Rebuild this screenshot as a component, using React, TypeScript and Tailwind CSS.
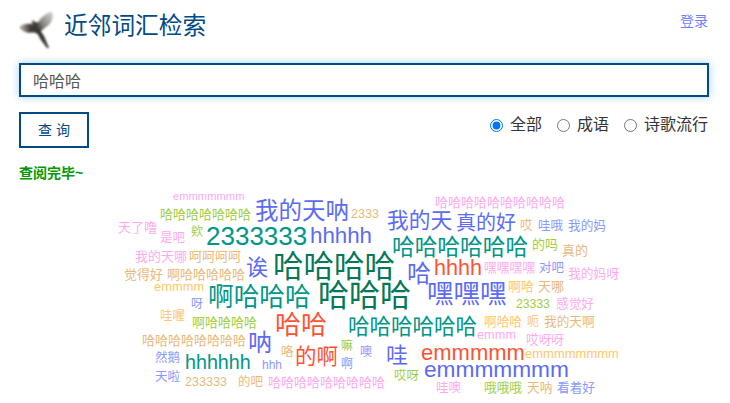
import React from "react";

const G = "#047857", T = "#009688", B = "#5c6bf5", R = "#ff5233", O = "#e9b97a", Y = "#ffc76b", P = "#ffaaf0", L = "#9fce3f", V = "#8a98ff";

const words: [string, number, number, number, string][] = [
  ["emmmmmmm", 173, 197, 11.2, P],
  ["哈哈哈哈哈哈哈", 160, 214, 13, L],
  ["我的天呐", 255, 212, 23.5, B],
  ["2333", 351, 214, 12.6, O],
  ["天了噜", 118, 227, 13, P],
  ["是吧", 160, 238, 12.5, P],
  ["欸", 191, 232, 12, L],
  ["2333333", 206, 236, 26, T],
  ["hhhhh", 310, 236, 22.3, B],
  ["我的天哪", 135, 256, 13, P],
  ["呵呵呵呵", 189, 256, 13, O],
  ["诶", 246, 268, 22, B],
  ["哈哈哈哈", 273, 266, 30.5, G],
  ["觉得好", 124, 274, 13, O],
  ["啊哈哈哈哈哈", 167, 274, 13, O],
  ["emmmm", 154, 287, 12.9, Y],
  ["啊哈哈哈", 208, 298, 25.7, T],
  ["哈哈哈", 318, 295, 31, G],
  ["呀", 191, 304, 12, V],
  ["哇喔", 160, 316, 12.5, Y],
  ["啊哈哈哈哈", 192, 322, 13, L],
  ["哈哈", 275, 325, 26, R],
  ["哈哈哈哈哈哈", 348, 328, 21.5, T],
  ["哈哈哈哈哈哈哈哈", 142, 340, 13, O],
  ["呐", 248, 343, 24, B],
  ["然鹅", 155, 358, 12.5, V],
  ["hhhhhh", 185, 363, 19.7, T],
  ["hhh", 262, 365, 12, V],
  ["咯", 281, 352, 12.5, O],
  ["的啊", 295, 358, 21.5, R],
  ["嘛", 341, 346, 12, L],
  ["噢", 360, 352, 12, V],
  ["啊", 341, 364, 12, V],
  ["天啦", 155, 377, 12.5, V],
  ["233333", 185, 382, 12.6, O],
  ["的吧", 238, 382, 12.5, O],
  ["哈哈哈哈哈哈哈哈哈", 268, 382, 13, P],
  ["我的天", 387, 221, 21.7, B],
  ["真的好", 456, 223, 20, B],
  ["哈哈哈哈哈哈哈哈哈哈", 435, 202, 13, P],
  ["哎", 520, 226, 12.5, O],
  ["哇哦", 538, 226, 12.5, V],
  ["我的妈", 568, 226, 12.7, V],
  ["哈哈哈哈哈哈", 392, 247, 22.7, T],
  ["的吗", 532, 244, 13, L],
  ["真的", 562, 250, 13, O],
  ["哈", 407, 274, 24, B],
  ["hhhh", 434, 268, 21.6, R],
  ["嘿嘿嘿嘿", 484, 268, 12.8, P],
  ["对吧", 539, 268, 12.5, V],
  ["我的妈呀", 568, 274, 12.8, P],
  ["嘿嘿嘿", 427, 294, 26.5, B],
  ["啊哈", 508, 286, 13, Y],
  ["天哪", 538, 286, 13, O],
  ["23333", 516, 304, 12.2, L],
  ["感觉好", 556, 304, 12.7, P],
  ["啊哈哈", 484, 322, 12.7, Y],
  ["呃", 527, 322, 12, Y],
  ["我的天啊", 544, 322, 12.7, O],
  ["emmm", 477, 335, 12.8, P],
  ["哎呀呀", 526, 340, 12.7, P],
  ["哇", 386, 356, 22, B],
  ["emmmmm", 421, 353, 22, R],
  ["emmmmmmmm", 525, 353, 13, Y],
  ["emmmmmmm", 424, 369, 22.7, B],
  ["哎呀", 394, 376, 12.5, L],
  ["哇噢", 436, 388, 12.5, P],
  ["哦哦哦", 484, 388, 12.7, L],
  ["天呐", 527, 388, 12.7, O],
  ["看着好", 557, 388, 12.7, V],
];

const CANVAS_TOP = 186;

function Bird() {
  return (
    <svg width="36" height="40" viewBox="0 0 36 40" className="block">
      <defs>
        <linearGradient id="lw" x1="0" y1="0" x2="1" y2="0">
          <stop offset="0" stopColor="#6b665f" stopOpacity="0.45" />
          <stop offset="0.7" stopColor="#3f3b36" />
        </linearGradient>
        <linearGradient id="rw" x1="0" y1="1" x2="1" y2="0">
          <stop offset="0" stopColor="#4a4640" />
          <stop offset="1" stopColor="#a8a29a" stopOpacity="0.5" />
        </linearGradient>
      </defs>
      <g style={{ filter: "blur(0.8px)" }}>
        <path d="M0 17 C3 14 9 13 13 14 L16 22 C10 24 3 22 0 17 Z" fill="url(#lw)" />
        <path d="M13 10 L16 12 L21 13 L23 20 L19 24 L14 22 Z" fill="#3b3834" />
        <path d="M18 15 C20 9 26 3 33 2 C35 7 33 13 27 17 C25 19 23 20 21 21 Z" fill="url(#rw)" />
        <path d="M17 21 L21 20 L25 26 L30 38 L28 38 L22 30 Z" fill="#37342f" />
      </g>
    </svg>
  );
}

function Radio({ label, checked }: { label: string; checked?: boolean }) {
  return (
    <label className="flex items-center">
      <input type="radio" name="scope" defaultChecked={checked} className="m-0 w-[13px] h-[13px]" />
      <span className="ml-[7px] text-[16px] leading-6 text-[#333]">{label}</span>
    </label>
  );
}

export default function App() {
  return (
    <div className="relative w-[730px] h-[403px] overflow-hidden bg-white font-['Liberation_Sans','Noto_Sans_CJK_SC',sans-serif]">
      <div className="px-[19px] pt-[10px]">
        <header className="flex h-[38px] items-start">
          <Bird />
          <h1 className="ml-[9px] text-[23.7px] leading-[32px] font-normal text-[#004a86]">近邻词汇检索</h1>
          <a className="ml-auto mr-[3px] mt-px text-[14px] leading-5 text-[#6f7fff]">登录</a>
        </header>
        <input
          readOnly
          value="哈哈哈"
          className="mt-[15px] block w-[690px] h-[34px] border-2 border-[#004a86] bg-white px-3 text-[16px] text-[#555] outline-none shadow-[0_0_8px_rgba(102,175,233,0.6)]"
        />
        <div className="mt-[15px] flex items-start justify-between pr-[3px]">
          <button className="w-[70px] h-[36px] border-2 border-[#004a86] text-[14px] text-[#004a86]">查&nbsp;询</button>
          <div className="flex gap-[15px] pt-px">
            <Radio label="全部" checked />
            <Radio label="成语" />
            <Radio label="诗歌流行" />
          </div>
        </div>
        <p className="mt-[15px] text-[14px] leading-5 font-bold text-[#009900]">查阅完毕~</p>
      </div>
      <div className="relative h-[217px] mt-[3px]">
        {words.map(([t, x, y, s, c], i) => (
          <span
            key={i}
            className="absolute whitespace-nowrap leading-none"
            style={{ left: x, top: y - s / 2 - CANVAS_TOP, fontSize: s, color: c }}
          >
            {t}
          </span>
        ))}
      </div>
    </div>
  );
}
